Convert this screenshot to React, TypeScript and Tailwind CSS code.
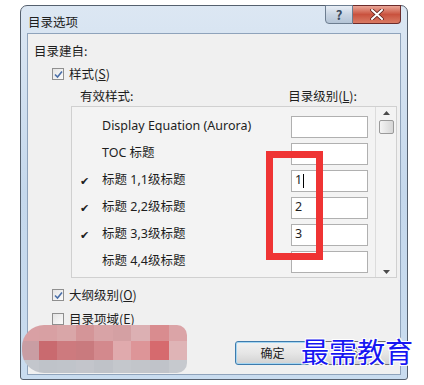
import React from 'react';

const CJK = "font-['Noto_Sans_CJK_SC',sans-serif]";

interface StyleRow {
  name: string;
  checked: boolean;
  level: string;
}

const rows: StyleRow[] = [
  { name: 'Display Equation (Aurora)', checked: false, level: '' },
  { name: 'TOC 标题', checked: false, level: '' },
  { name: '标题 1,1级标题', checked: true, level: '1' },
  { name: '标题 2,2级标题', checked: true, level: '2' },
  { name: '标题 3,3级标题', checked: true, level: '3' },
  { name: '标题 4,4级标题', checked: false, level: '' },
];

// mosaic colours, row by row (top, middle, bottom)
const mosaic = [
  ['#d9a0a4', '#d8a0a3', '#d9a6a8', '#d49598', '#d8a3a6', '#d4a0a3', '#dcb0b3', '#d98c8f', '#dba4a7'],
  ['#c99da3', '#c96a6f', '#cd7a7e', '#c97a7e', '#d3898d', '#e0aaad', '#dd9598', '#d66a6e', '#dfb4b6'],
  ['#c3c6cc', '#bfc3c9', '#c0c4ca', '#c3c5cb', '#bfc2c8', '#c4c7cc', '#c2c5ca', '#c0c3c9', '#c6c9ce'],
];

function CheckBox({ checked }: { checked: boolean }) {
  return (
    <div className="w-[12px] h-[12px] border border-[#8f8f8f] bg-gradient-to-br from-[#e4e4e4] to-[#fbfbfb] flex items-center justify-center">
      {checked && (
        <svg width="9" height="9" viewBox="0 0 9 9">
          <path d="M1 4.5 L3.5 7 L8 1.5" fill="none" stroke="#4a6fa8" strokeWidth="1.6" />
        </svg>
      )}
    </div>
  );
}

export default function App() {
  return (
    <div className={`w-[424px] h-[385px] bg-white relative overflow-hidden ${CJK}`}>
      <div className="pl-[20px] pt-[5px]">
        {/* window frame */}
        <div className="w-[388px] h-[375px] rounded-t-[7px] rounded-b-[3px] border border-[#55606e] bg-gradient-to-b from-[#dce7f3] via-[#c5d8ec] to-[#c9dcef] px-[6px] flex flex-col">
          {/* title bar */}
          <div className="h-[27px] flex items-start justify-between">
            <div className="pt-[9px] pl-[1px] text-[12.5px] leading-[14px] text-[#1e1e1e]">目录选项</div>
            <div className="flex -mt-[1px]">
              <div className="w-[28px] h-[19px] border border-[#6d7d90] rounded-bl-[4px] bg-gradient-to-b from-[#e8eef6] via-[#c8d4e2] to-[#b4c4d6] flex items-center justify-center text-[13px] leading-none text-[#3c4c60] font-bold">
                ?
              </div>
              <div className="w-[48px] h-[19px] border border-l-0 border-[#6b2b2b] rounded-br-[4px] bg-gradient-to-b from-[#e9a597] via-[#c9523e] to-[#d97a64] flex items-center justify-center">
                <svg width="14" height="11" viewBox="0 0 14 11">
                  <path d="M2 1 L12 10 M12 1 L2 10" stroke="#5a1f1a" strokeWidth="3.6" strokeLinecap="round" />
                  <path d="M2 1 L12 10 M12 1 L2 10" stroke="#ffffff" strokeWidth="2" strokeLinecap="round" />
                </svg>
              </div>
            </div>
          </div>

          {/* client area */}
          <div className="flex-1 mb-[4px] border border-[#8fa3bb] bg-[#f0f0f0] relative">
            <div className="pt-[9px] pl-[6px] text-[12.5px] leading-[15px] text-[#1e1e1e]">目录建自:</div>

            <div className="mt-[9px] pl-[24px] flex items-center gap-[5px] h-[14px]">
              <CheckBox checked />
              <span className="text-[12.5px] text-[#1e1e1e]">
                样式(<span className="underline">S</span>)
              </span>
            </div>

            <div className="mt-[7px] pl-[52px] pr-[43px] flex justify-between h-[15px] text-[12.5px] leading-[15px] text-[#1e1e1e]">
              <span>有效样式:</span>
              <span>
                目录级别(<span className="underline">L</span>):
              </span>
            </div>

            {/* list box */}
            <div className="mt-[3px] ml-[43px] w-[326px] h-[172px] border border-[#d0d0d0] bg-[#f3f3f3] flex relative">
              <div className="w-[304px] h-full border-r border-[#dcdcdc] pt-[6px]">
                {rows.map((r) => (
                  <div key={r.name} className="h-[27px] flex items-center">
                    <div className="w-[30px] pl-[8px] text-[11px] text-[#1e1e1e]">{r.checked ? '✔' : ''}</div>
                    <div className="flex-1 font-['Noto_Sans','Noto_Sans_CJK_SC',sans-serif] text-[12.5px] text-[#1e1e1e]">
                      {r.name}
                    </div>
                    <div className="w-[77px] h-[22px] mr-[7px] border border-[#b0b0b0] bg-white flex items-center pl-[3px] font-['Noto_Sans',sans-serif] text-[12.5px] text-[#1e1e1e]">
                      {r.level}
                      {r.level === '1' && <span className="w-[1px] h-[14px] bg-black ml-[1px]" />}
                    </div>
                  </div>
                ))}
              </div>
              {/* scrollbar */}
              <div className="flex-1 flex flex-col items-center pt-[4px] pb-[3px]">
                <svg width="7" height="4" viewBox="0 0 7 4">
                  <path d="M0 4 L3.5 0 L7 4 Z" fill="#4a4a4a" />
                </svg>
                <div className="mt-[5px] w-[15px] h-[14px] border border-[#9a9a9a] rounded-[2px] bg-gradient-to-r from-[#f4f4f4] to-[#d6d6d6]" />
                <div className="flex-1" />
                <svg width="7" height="4" viewBox="0 0 7 4">
                  <path d="M0 0 L3.5 4 L7 0 Z" fill="#4a4a4a" />
                </svg>
              </div>

              {/* red annotation */}
              <div className="absolute left-[194px] top-[44px] w-[57px] h-[109px] border-[7px] border-[#ef3434]" />
            </div>

            <div className="mt-[10px] pl-[24px] flex items-center gap-[5px] h-[14px]">
              <CheckBox checked />
              <span className="text-[12.5px] text-[#1e1e1e]">
                大纲级别(<span className="underline">O</span>)
              </span>
            </div>
            <div className="mt-[10px] pl-[24px] flex items-center gap-[5px] h-[14px]">
              <CheckBox checked={false} />
              <span className="text-[12.5px] text-[#1e1e1e]">
                目录项域(<span className="underline">E</span>)
              </span>
            </div>

            {/* buttons */}
            <div className="mt-[15px] pr-[8px] flex justify-end gap-[7px]">
              <div className="w-[75px] h-[24px] rounded-[3px] border border-[#3d7bad] bg-gradient-to-b from-[#f2f2f2] via-[#e6e6e6] to-[#d2d2d2] shadow-[inset_0_0_0_1px_#a6d6f2] flex items-center justify-center text-[12px] text-[#1e1e1e]">
                确定
              </div>
              <div className="w-[75px] h-[24px] rounded-[3px] border border-[#707070] bg-gradient-to-b from-[#f2f2f2] via-[#e6e6e6] to-[#d2d2d2] flex items-center justify-center text-[12px] text-[#1e1e1e]">
                取消
              </div>
            </div>
          </div>
        </div>
      </div>

      {/* pixelated redaction */}
      <div className="absolute left-[22px] top-[325px] w-[165px] h-[48px] rounded-l-[22px] rounded-r-[10px] overflow-hidden flex flex-col">
        {mosaic.map((row, i) => (
          <div key={i} className={i === 0 ? 'flex h-[16px]' : i === 1 ? 'flex h-[19px]' : 'flex h-[13px]'}>
            {row.map((c, j) => (
              <div key={j} className={j === 0 ? 'w-[18px] h-full' : 'w-[20px] h-full'} style={{ backgroundColor: c }} />
            ))}
          </div>
        ))}
      </div>

      {/* watermark */}
      <div className="absolute left-[301px] top-[332px] text-[28px] leading-[38px] text-[#1616f2] [text-shadow:_1px_1px_0_#fff,_-1px_-1px_0_#fff,_1px_-1px_0_#fff,_-1px_1px_0_#fff]">
        最需教育
      </div>
    </div>
  );
}
